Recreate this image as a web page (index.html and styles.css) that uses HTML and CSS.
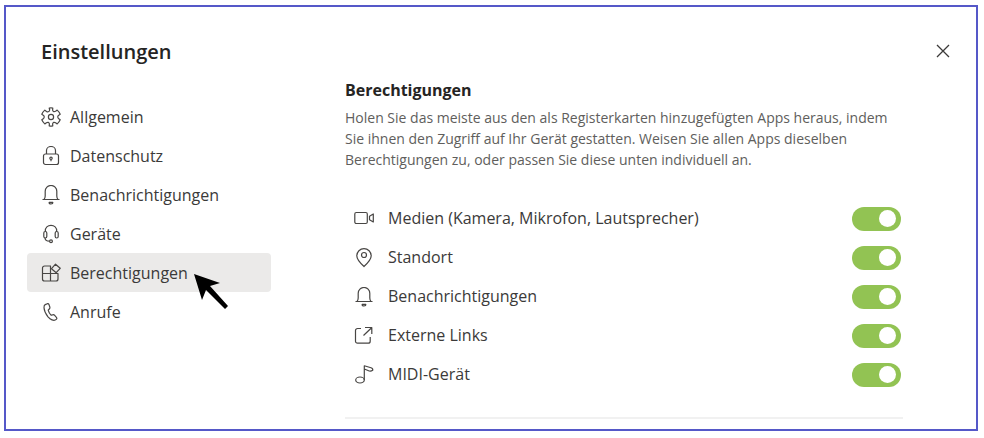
FILE: index.html
```
<!DOCTYPE html>
<html lang="de">
<head>
    <meta charset="UTF-8">
    <meta name="viewport" content="width=device-width, initial-scale=1.0">
    <title>Einstellungen</title>
    <link rel="stylesheet" href="styles.css">
</head>
<body>
    <div class="dialog">
        <header class="header">
            <h1>Einstellungen</h1>
            <button type="button" class="close" aria-label="Schließen">
                <svg width="14" height="14" viewBox="0 0 14 14"><path d="M1 1l12 12M13 1L1 13"/></svg>
            </button>
        </header>
        <div class="content">
            <nav class="nav">
                <a href="#allgemein">
                    <svg class="icon" viewBox="0 0 20 20"><path d="M8.2 1L8.700 3Q8.500 5 6.600 4.900Q5.800 5 5.200 4.300L3.800 3.100Q1.800 4.900 .8 7.200L2.600 8.400Q3.800 9.800 2.600 11.500L.8 12.800Q1.800 15.100 3.800 16.900L5.400 15.700Q7.700 14.500 8.400 16.800L8.200 19Q10 19.400 11.800 19L11.600 16.800Q12.300 14.500 14.600 15.700L16.200 16.900Q18.200 15.100 19.200 12.800L17.400 11.500Q16.200 9.800 17.400 8.400L19.200 7.200Q18.200 4.900 16.200 3.100L14.600 4.300Q12.300 5.500 11.600 3.200L11.800 1Q10 .6 8.200 1z"/><circle cx="10" cy="10" r="2.600"/></svg>
                    <span>Allgemein</span>
                </a>
                <a href="#datenschutz">
                    <svg class="icon" viewBox="0 0 20 20"><rect x="2.500" y="8" width="15" height="10.500" rx="2"/><path d="M5.500 8V4.500a4.500 4 0 0 1 9 0V8M10 13v2.200"/><circle cx="10" cy="12.300" r="1.200"/></svg>
                    <span>Datenschutz</span>
                </a>
                <a href="#benachrichtigungen">
                    <svg class="icon" viewBox="0 0 20 20"><path d="M1.500 14.500h17M3 14.500Q4.200 13 4.200 11V6.300a5.800 5.800 0 0 1 11.600 0V11Q15.800 13 17 14.500M8 17.300h4M8 17.300a2 1.700 0 0 0 4 0"/></svg>
                    <span>Benachrichtigungen</span>
                </a>
                <a href="#geraete">
                    <svg class="icon" viewBox="0 0 20 20"><path d="M4.300 7.500C3.500-.700 16.500-.700 15.700 7.500M4 13.700c0 2.500 1.500 3.500 4.600 3.500"/><rect x="2.800" y="7.500" width="3" height="6.500" rx="1.500"/><rect x="14.200" y="7.500" width="3" height="6.500" rx="1.500"/><circle cx="10" cy="17.200" r="1.400"/></svg>
                    <span>Geräte</span>
                </a>
                <a href="#berechtigungen" class="active" aria-current="page">
                    <svg class="icon" viewBox="0 0 20 20"><path d="M10 3H3.500a2 2 0 0 0-2 2v11a2 2 0 0 0 2 2h11.500a2 2 0 0 0 2-2v-5.500H1.500M9.500 3v15"/><path d="M14.500 1.200l4.700 4.100-4 4.400-4.700-4z"/></svg>
                    <span>Berechtigungen</span>
                    <svg class="pointer" width="36" height="38" viewBox="0 0 36 38"><path d="M0 0L26 9 16 12 34 32 31 35 12 16 8 26z"/></svg>
                </a>
                <a href="#anrufe">
                    <svg class="icon" viewBox="0 0 20 20"><path d="M4.200 2.600L6.400 1.700Q7.500 1.400 8 2.600L8.900 5.200Q9.200 6.200 8.300 7L7.200 8.200Q7.900 11.200 10.200 13.300L11.800 12.800Q12.900 12.500 13.700 13.400L15.600 15.600Q16.300 16.600 15.300 17.400C12.800 19.700 9.200 17.300 7 14.800C4.800 12 3.200 9 3 5.700Q2.900 3.200 4.200 2.600z"/></svg>
                    <span>Anrufe</span>
                </a>
            </nav>
            <main class="panel">
                <h2>Berechtigungen</h2>
                <p>Holen Sie das meiste aus den als Registerkarten hinzugefügten Apps heraus, indem<br>
                Sie ihnen den Zugriff auf Ihr Gerät gestatten. Weisen Sie allen Apps dieselben<br>
                Berechtigungen zu, oder passen Sie diese unten individuell an.</p>
                <div class="permissions">
                    <div class="row">
                        <svg class="icon" viewBox="0 0 20 20"><rect x=".8" y="3.500" width="12.500" height="11" rx="1.500"/><path d="M19.300 5v8L15.500 10.700V7.300z"/></svg>
                        <label for="medien">Medien (Kamera, Mikrofon, Lautsprecher)</label>
                        <input type="checkbox" id="medien" class="toggle" checked>
                    </div>
                    <div class="row">
                        <svg class="icon" viewBox="0 0 20 20"><path d="M10 18.500C6.500 15.300 2.800 12 2.800 7.800a7.200 7.200 0 0 1 14.400 0c0 4.200-3.700 7.500-7.200 10.700z"/><circle cx="10" cy="7" r="2.500"/></svg>
                        <label for="standort">Standort</label>
                        <input type="checkbox" id="standort" class="toggle" checked>
                    </div>
                    <div class="row">
                        <svg class="icon" viewBox="0 0 20 20"><path d="M1.500 14.500h17M3 14.500Q4.200 13 4.200 11V6.300a5.800 5.800 0 0 1 11.600 0V11Q15.800 13 17 14.500M8 17.300h4M8 17.300a2 1.700 0 0 0 4 0"/></svg>
                        <label for="hinweise">Benachrichtigungen</label>
                        <input type="checkbox" id="hinweise" class="toggle" checked>
                    </div>
                    <div class="row">
                        <svg class="icon" viewBox="0 0 20 20"><path d="M7 2.500H3.500a2 2 0 0 0-2 2v10.700a2 2 0 0 0 2 2h10.700a2 2 0 0 0 2-2V11M11 1.500h6.800V8M17.600 1.700L9.500 9.500"/></svg>
                        <label for="links">Externe Links</label>
                        <input type="checkbox" id="links" class="toggle" checked>
                    </div>
                    <div class="row">
                        <svg class="icon" viewBox="0 0 20 20"><ellipse cx="6" cy="15" rx="4.300" ry="3"/><path d="M10.300 15V.8L17 2.800Q19.200 3.500 18.700 5.300Q16.500 6.800 14 5.500L10.300 4"/></svg>
                        <label for="midi">MIDI-Gerät</label>
                        <input type="checkbox" id="midi" class="toggle" checked>
                    </div>
                </div>
            </main>
        </div>
    </div>
</body>
</html>
```
FILE: styles.css
```
* {
    box-sizing: border-box;
}
body {
    margin: 5px 6px 7px 4px;
    font-family: "Segoe UI", "Open Sans", sans-serif;
    font-size: 16px;
    color: #3b3a39;
    background-color: #fff;
}
.dialog {
    padding: 28px 20px 10px 21px;
    border: 2px solid #5558c8;
}
.header {
    display: flex;
    justify-content: space-between;
    align-items: center;
    height: 32px;
    padding-left: 14px;
}
h1 {
    margin: 0;
    font-size: 20px;
    font-weight: 600;
    color: #252423;
}
.close {
    padding: 6px;
    border: 0;
    background: none;
    line-height: 0;
}
.close svg {
    fill: none;
    stroke: #3b3a39;
    stroke-width: 1.3;
}
.content {
    display: flex;
    gap: 74px;
}
.nav {
    display: flex;
    flex: 0 0 244px;
    flex-direction: column;
    padding-top: 30px;
}
.nav a {
    position: relative;
    display: flex;
    align-items: center;
    gap: 9px;
    height: 39px;
    padding: 0 14px;
    border-radius: 4px;
    color: inherit;
    text-decoration: none;
}
.nav a.active {
    background-color: #ebeae9;
}
.icon {
    flex: none;
    width: 20px;
    height: 20px;
    fill: none;
    stroke: #484644;
    stroke-width: 1.2;
    stroke-linejoin: round;
}
.pointer {
    position: absolute;
    left: 167px;
    top: 21px;
    z-index: 1;
}
.panel {
    flex: 1;
    margin-right: 53px;
    padding-top: 11px;
}
h2 {
    margin: 0;
    font-size: 16px;
    font-weight: 700;
    line-height: 24px;
    color: #252423;
}
.panel p {
    margin: 5px 0 29px;
    font-size: 14px;
    line-height: 21px;
    color: #605e5c;
    white-space: nowrap;
}
.permissions {
    padding-bottom: 23px;
    border-bottom: 2px solid #f1f1f1;
}
.row {
    display: flex;
    align-items: center;
    height: 39px;
    padding: 0 2px 0 9px;
}
.row label {
    flex: 1;
    margin-left: 14px;
    padding-bottom: 2px;
}
.toggle {
    appearance: none;
    display: flex;
    justify-content: flex-end;
    align-items: center;
    width: 49px;
    height: 24px;
    margin: 0;
    padding: 0 5px;
    border-radius: 12px;
    background-color: #92c353;
}
.toggle::before {
    content: "";
    width: 17px;
    height: 17px;
    border-radius: 50%;
    background-color: #fff;
}
.toggle:not(:checked) {
    justify-content: flex-start;
    background-color: #8a8886;
}
```
